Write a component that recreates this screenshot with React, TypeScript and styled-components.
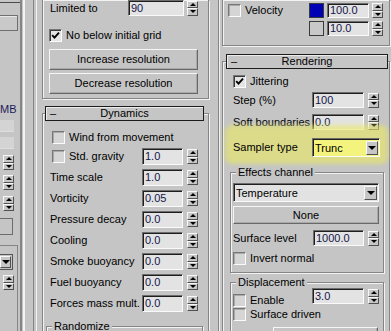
import React from "react";
import styled, { createGlobalStyle } from "styled-components";

const BG = "#c5c5c5";
const DARK = "#858585";
const LIGHT = "#f2f2f2";

const GlobalStyle = createGlobalStyle`
  html, body { margin: 0; padding: 0; background: ${BG}; }
  #root { width: 391px; height: 331px; }
`;

const Screen = styled.div`
  display: flex;
  width: 391px;
  height: 331px;
  overflow: hidden;
  background: ${BG};
  font-family: "Liberation Sans", Arial, sans-serif;
  font-size: 11px;
  color: #000;
`;

/* ---------- left partial column ---------- */
const LeftStrip = styled.div`
  width: 21px;
  flex: none;
  box-sizing: border-box;
  border-right: 1px solid ${DARK};
  display: flex;
  flex-direction: column;
  align-items: flex-start;
`;
const LeftTopEdge = styled.div`
  width: 20px;
  height: 2px;
  border-bottom: 1px solid #4a4a4a;
`;
const LeftButton = styled.div`
  margin-top: 12px;
  width: 18px;
  height: 16px;
  box-sizing: border-box;
  border: 1px solid #707070;
  border-left: none;
  box-shadow: inset 0 1px 0 #e8e8e8;
  background: #c9c9c9;
`;
const LeftUnit = styled.div`
  margin-top: 73px;
  height: 11px;
  line-height: 11px;
  color: #1c1c5c;
`;
const LeftFlatField = styled.div`
  margin-top: 5px;
  width: 14px;
  height: 12px;
  background: #d4d4d4;
  box-shadow: inset 0 -1px 0 #dedede;
`;
const LeftBox = styled.div`
  margin-top: 7px;
  width: 13px;
  height: 17px;
  box-sizing: border-box;
  border: 1px solid #6c6c6c;
  border-left: none;
`;
const LeftGroup = styled.div`
  margin-top: 10px;
  width: 18px;
  flex: 1;
  box-sizing: border-box;
  border-top: 1px solid ${DARK};
  border-right: 1px solid ${DARK};
  display: flex;
  flex-direction: column;
  align-items: flex-start;
`;
const LeftCombo = styled.div`
  margin-top: 8px;
  width: 13px;
  height: 16px;
  box-sizing: border-box;
  border: 1px solid #555;
  border-left: none;
  display: flex;
  padding: 1px 1px 1px 0;
`;

const Sep1 = styled.div`
  width: 21px;
  flex: none;
  background: linear-gradient(
    to right,
    ${DARK} 0 1px,
    ${BG} 1px 2px,
    ${LIGHT} 2px 4px,
    ${BG} 4px 12px,
    ${DARK} 12px 13px,
    ${BG} 13px 15px,
    ${LIGHT} 15px 16px,
    ${BG} 16px
  );
`;
const Sep2 = styled.div`
  width: 12px;
  flex: none;
  background: linear-gradient(
    to right,
    ${BG} 0 8px,
    ${DARK} 8px 9px,
    ${LIGHT} 9px 10px,
    ${BG} 10px
  );
`;

/* ---------- columns & rollouts ---------- */
const Column = styled.div<{ $w: number }>`
  width: ${(p) => p.$w}px;
  flex: none;
  display: flex;
  flex-direction: column;
`;
const Rollout = styled.div<{ $mt: number }>`
  margin-top: ${(p) => p.$mt}px;
  display: flex;
  flex-direction: column;
`;
const RollHeader = styled.div<{ $ml: number; $mr: number }>`
  position: relative;
  z-index: 1;
  margin: 0 ${(p) => p.$mr}px 0 ${(p) => p.$ml}px;
  height: 15px;
  box-sizing: border-box;
  border: 1px solid #1c1c1c;
  background: ${BG};
  box-shadow: inset 1px 1px 0 #ececec;
  display: grid;
  grid-template-columns: 14px 1fr 14px;
  align-items: center;
  line-height: 13px;
`;
const RollMinus = styled.span`
  padding-left: 4px;
`;
const RollTitle = styled.span`
  text-align: center;
`;
const Frame = styled.div<{ $open?: boolean; $mt?: number; $pt?: number; $pb?: number }>`
  margin-top: ${(p) => p.$mt ?? 0}px;
  margin-right: 1px;
  border: 1px solid ${DARK};
  ${(p) => (p.$open ? "border-top: none;" : "")}
  box-shadow: inset 1px 1px 0 ${LIGHT}, 1px 1px 0 ${LIGHT};
  padding: ${(p) => p.$pt ?? 0}px 0 ${(p) => p.$pb ?? 0}px;
  display: flex;
  flex-direction: column;
  align-items: flex-start;
`;

/* ---------- controls ---------- */
const Row = styled.div<{ $pl?: number; $mt?: number; $h?: number; $top?: boolean }>`
  display: flex;
  align-items: ${(p) => (p.$top ? "flex-start" : "center")};
  padding-left: ${(p) => p.$pl ?? 0}px;
  margin-top: ${(p) => p.$mt ?? 0}px;
  height: ${(p) => (p.$h ? `${p.$h}px` : "auto")};
  white-space: nowrap;
`;
const HighlightRow = styled(Row)`
  position: relative;
  z-index: 0;
  align-self: stretch;
  &::before {
    content: "";
    position: absolute;
    left: 2px;
    right: 1px;
    top: -13px;
    bottom: -7px;
    z-index: -1;
    border-radius: 7px;
    background: rgba(234, 234, 98, 0.6);
    filter: blur(2px);
  }
`;
const Label = styled.span<{ $w?: number; $mt?: number }>`
  flex: none;
  width: ${(p) => (p.$w ? `${p.$w}px` : "auto")};
  margin-top: ${(p) => p.$mt ?? 0}px;
  line-height: 13px;
`;
const Field = styled.div<{ $w: number; $h: number }>`
  flex: none;
  width: ${(p) => p.$w}px;
  height: ${(p) => p.$h}px;
  box-sizing: border-box;
  padding-left: 2px;
  display: flex;
  align-items: center;
  border: 1px solid;
  border-color: #6d6d6d #fafafa #fafafa #6d6d6d;
  box-shadow: inset 1px 1px 0 #1e1e1e;
  background: #e3e3e3;
  color: #15154a;
  line-height: 13px;
`;
const SpinBox = styled.div<{ $ml?: number; $h?: number; $mt?: number }>`
  flex: none;
  width: 11px;
  height: ${(p) => p.$h ?? 15}px;
  margin-left: ${(p) => p.$ml ?? 0}px;
  margin-top: ${(p) => p.$mt ?? 0}px;
  display: flex;
  flex-direction: column;
`;
const SpinHalf = styled.div<{ $down?: boolean }>`
  flex: 1;
  box-sizing: border-box;
  border: 1px solid;
  border-color: #f8f8f8 #505050 #505050 #f8f8f8;
  background: #c6c6c6;
  display: flex;
  align-items: center;
  justify-content: center;
  &::after {
    content: "";
    border-left: 3px solid transparent;
    border-right: 3px solid transparent;
    ${(p) => (p.$down ? "border-top: 3px solid #000;" : "border-bottom: 3px solid #000;")}
  }
`;
const Spinner = (props: { $ml?: number; $h?: number; $mt?: number }) => (
  <SpinBox {...props}>
    <SpinHalf />
    <SpinHalf $down />
  </SpinBox>
);

const CheckBox = styled.span<{ $on?: boolean; $mt?: number }>`
  flex: none;
  width: 13px;
  height: 13px;
  margin-right: 4px;
  margin-top: ${(p) => p.$mt ?? 0}px;
  box-sizing: border-box;
  border: 1px solid;
  border-color: #767676 #fbfbfb #fbfbfb #767676;
  box-shadow: inset 1px 1px 0 ${(p) => (p.$on ? "#3a3a3a" : "#a9a9a9")};
  background: ${(p) => (p.$on ? "#e4e4e4" : "#d5d5d5")};
  display: flex;
  align-items: center;
  justify-content: center;
`;
const Tick = () => (
  <svg width="9" height="9" viewBox="0 0 9 9">
    <path d="M1.2 4.2 L3.5 6.6 L8 1.6" fill="none" stroke="#000" strokeWidth="1.9" />
  </svg>
);

const PushButton = styled.div<{ $w: number; $h: number; $ml?: number; $mt?: number }>`
  flex: none;
  width: ${(p) => p.$w}px;
  height: ${(p) => p.$h}px;
  margin-left: ${(p) => p.$ml ?? 0}px;
  margin-top: ${(p) => p.$mt ?? 0}px;
  box-sizing: border-box;
  border: 1px solid;
  border-color: #f6f6f6 #686868 #686868 #f6f6f6;
  box-shadow: inset -1px -1px 0 #a9a9a9;
  background: ${BG};
  display: flex;
  align-items: center;
  justify-content: center;
  line-height: 13px;
`;

const Combo = styled.div<{ $w: number; $h: number; $bg: string; $mt?: number }>`
  flex: none;
  width: ${(p) => p.$w}px;
  height: ${(p) => p.$h}px;
  margin-top: ${(p) => p.$mt ?? 0}px;
  box-sizing: border-box;
  border: 1px solid;
  border-color: #6d6d6d #fafafa #fafafa #6d6d6d;
  box-shadow: inset 1px 1px 0 #1e1e1e;
  background: ${(p) => p.$bg};
  display: flex;
  align-items: stretch;
  padding: 2px 1px 1px 2px;
  line-height: 13px;
`;
const ComboText = styled.span`
  flex: 1;
  display: flex;
  align-items: center;
`;
const ComboArrow = styled.span<{ $w?: number }>`
  flex: none;
  width: ${(p) => p.$w ?? 12}px;
  box-sizing: border-box;
  border: 1px solid;
  border-color: #f8f8f8 #505050 #505050 #f8f8f8;
  background: #c6c6c6;
  display: flex;
  align-items: center;
  justify-content: center;
  &::after {
    content: "";
    border-left: 4px solid transparent;
    border-right: 4px solid transparent;
    border-top: 4px solid #000;
  }
`;

const Swatch = styled.span<{ $c: string }>`
  flex: none;
  width: 15px;
  height: 15px;
  margin-right: 3px;
  box-sizing: border-box;
  border: 1px solid #3a3a3a;
  background: ${(p) => p.$c};
`;

const Group = styled.fieldset<{ $mt: number; $ml: number; $mr: number; $pb?: number; $grow?: boolean }>`
  align-self: stretch;
  min-width: 0;
  margin: ${(p) => p.$mt}px ${(p) => p.$mr}px 0 ${(p) => p.$ml}px;
  padding: 0 4px ${(p) => p.$pb ?? 0}px 2px;
  border: 1px solid ${DARK};
  box-shadow: inset 1px 1px 0 ${LIGHT}, 1px 1px 0 ${LIGHT};
  display: flex;
  flex-direction: column;
  align-items: flex-start;
  ${(p) => (p.$grow ? "min-height: 40px;" : "")}
`;
const Legend = styled.legend`
  margin-left: 3px;
  padding: 0 2px;
  line-height: 13px;
  background: ${BG};
`;

export default function App() {
  return (
    <>
      <GlobalStyle />
      <Screen>
        <LeftStrip>
          <LeftTopEdge />
          <LeftButton />
          <LeftUnit>MB</LeftUnit>
          <LeftFlatField />
          <LeftFlatField />
          <Spinner $ml={3} $mt={6} />
          <Spinner $ml={3} $mt={5} />
          <Spinner $ml={3} $mt={6} />
          <LeftBox />
          <LeftGroup>
            <LeftCombo>
              <ComboArrow $w={11} />
            </LeftCombo>
            <Spinner $ml={3} $mt={5} />
          </LeftGroup>
        </LeftStrip>
        <Sep1 />

        <Column $w={168}>
          <Frame $open $pb={4}>
            <Row $pl={7} $h={16}>
              <Label $w={78}>Limited to</Label>
              <Field $w={56} $h={16}>90</Field>
              <Spinner $ml={3} />
            </Row>
            <Row $pl={6} $mt={13} $h={13}>
              <CheckBox $on>
                <Tick />
              </CheckBox>
              <Label>No below initial grid</Label>
            </Row>
            <PushButton $w={149} $h={21} $ml={6} $mt={7}>
              Increase resolution
            </PushButton>
            <PushButton $w={149} $h={21} $ml={6} $mt={3}>
              Decrease resolution
            </PushButton>
          </Frame>

          <Rollout $mt={7}>
            <RollHeader $ml={3} $mr={6}>
              <RollMinus>–</RollMinus>
              <RollTitle>Dynamics</RollTitle>
            </RollHeader>
            <Frame $mt={-8} $pt={17}>
              <Row $pl={9} $h={13}>
                <CheckBox />
                <Label>Wind from movement</Label>
              </Row>
              <Row $pl={9} $mt={4} $h={17}>
                <CheckBox />
                <Label $w={73}>Std. gravity</Label>
                <Field $w={41} $h={17}>1.0</Field>
                <Spinner $ml={4} />
              </Row>
              {[
                ["Time scale", "1.0"],
                ["Vorticity", "0.05"],
                ["Pressure decay", "0.0"],
                ["Cooling", "0.0"],
                ["Smoke buoyancy", "0.0"],
                ["Fuel buoyancy", "0.0"],
                ["Forces mass mult.", "0.0"],
              ].map(([l, v]) => (
                <Row key={l} $pl={7} $mt={4} $h={17}>
                  <Label $w={92}>{l}</Label>
                  <Field $w={41} $h={17}>{v}</Field>
                  <Spinner $ml={4} />
                </Row>
              ))}
              <Group $mt={8} $ml={3} $mr={5} $grow>
                <Legend>Randomize</Legend>
              </Group>
            </Frame>
          </Rollout>
        </Column>

        <Sep2 />

        <Column $w={169}>
          <Frame $open $pt={3} $pb={9}>
            <Row $pl={5} $h={15}>
              <CheckBox />
              <Label $w={64}>Velocity</Label>
              <Swatch $c="#0000b4" />
              <Field $w={42} $h={15}>100.0</Field>
              <Spinner $ml={3} />
            </Row>
            <Row $pl={86} $mt={3} $h={15}>
              <Swatch $c="#c8c8c8" />
              <Field $w={42} $h={15}>10.0</Field>
              <Spinner $ml={3} />
            </Row>
          </Frame>

          <Rollout $mt={8}>
            <RollHeader $ml={4} $mr={3}>
              <RollMinus>–</RollMinus>
              <RollTitle>Rendering</RollTitle>
            </RollHeader>
            <Frame $mt={-8} $pt={13}>
              <Row $pl={10} $h={13}>
                <CheckBox $on>
                  <Tick />
                </CheckBox>
                <Label>Jittering</Label>
              </Row>
              <Row $pl={10} $mt={4} $h={16}>
                <Label $w={79}>Step (%)</Label>
                <Field $w={52} $h={16}>100</Field>
                <Spinner $ml={4} />
              </Row>
              <Row $pl={10} $mt={6} $h={16}>
                <Label $w={79}>Soft boundaries</Label>
                <Field $w={52} $h={16}>0.0</Field>
                <Spinner $ml={4} />
              </Row>
              <HighlightRow $pl={10} $mt={8} $h={19}>
                <Label $w={79}>Sampler type</Label>
                <Combo $w={68} $h={19} $bg="#f3f37e">
                  <ComboText>Trunc</ComboText>
                  <ComboArrow />
                </Combo>
              </HighlightRow>

              <Group $mt={9} $ml={7} $mr={5} $pb={7}>
                <Legend>Effects channel</Legend>
                <Combo $w={146} $h={19} $bg="#e2e2e2" $mt={4}>
                  <ComboText>Temperature</ComboText>
                  <ComboArrow $w={13} />
                </Combo>
                <PushButton $w={146} $h={18} $mt={4}>
                  None
                </PushButton>
                <Row $mt={6} $h={16}>
                  <Label $w={80}>Surface level</Label>
                  <Field $w={51} $h={16}>1000.0</Field>
                  <Spinner $ml={4} />
                </Row>
                <Row $mt={6} $h={13}>
                  <CheckBox />
                  <Label>Invert normal</Label>
                </Row>
              </Group>

              <Group $mt={3} $ml={7} $mr={5} $pb={20}>
                <Legend>Displacement</Legend>
                <Row $mt={-1} $h={19} $top>
                  <CheckBox $mt={6} />
                  <Label $w={62} $mt={6}>
                    Enable
                  </Label>
                  <Field $w={52} $h={16}>3.0</Field>
                  <Spinner $ml={4} $mt={1} />
                </Row>
                <Row $mt={1} $h={13}>
                  <CheckBox />
                  <Label>Surface driven</Label>
                </Row>
                <PushButton $w={105} $h={18} $ml={40} $mt={6} />
              </Group>
            </Frame>
          </Rollout>
        </Column>
      </Screen>
    </>
  );
}
